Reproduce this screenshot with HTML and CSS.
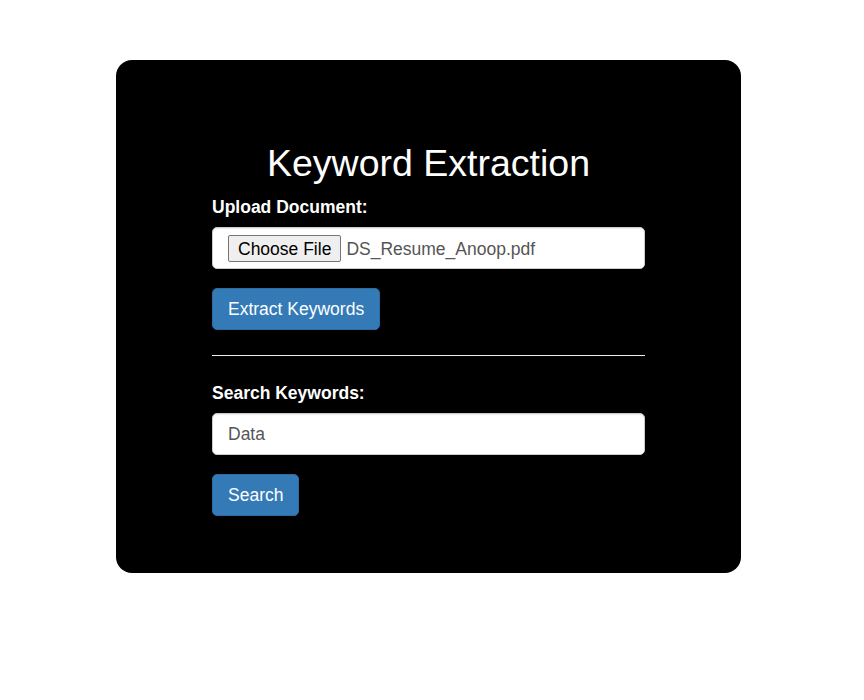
FILE: index.html
```html
<!DOCTYPE html>
<html lang="en">
<head>
<meta charset="utf-8">
<title>Keyword Extraction</title>
<link rel="stylesheet" href="styles.css">
</head>
<body>
<div class="card">
  <h1 class="title">Keyword Extraction</h1>
  <form class="section">
    <label class="label">Upload Document:</label>
    <div class="control file-control">
      <span class="file-btn">Choose File</span>
      <span class="file-name">DS_Resume_Anoop.pdf</span>
    </div>
    <button type="button" class="btn">Extract Keywords</button>
  </form>
  <hr class="divider">
  <form class="section">
    <label class="label">Search Keywords:</label>
    <input class="control text-input" type="text" value="Data">
    <button type="button" class="btn">Search</button>
  </form>
</div>
</body>
</html>
```
FILE: styles.css
```css
html, body {
  margin: 0;
  padding: 0;
  background: #ffffff;
}
body {
  font-family: "Liberation Sans", Arial, Helvetica, sans-serif;
  font-size: 17.5px;
  color: #333;
}
.card {
  box-sizing: border-box;
  width: 625px;
  margin: 60px 0 0 116px;
  padding: 81px 96px 57px 96px;
  background: #000;
  border-radius: 16px;
  display: flex;
  flex-direction: column;
}
.title {
  margin: 0 0 9.5px 0;
  font-size: 37.5px;
  line-height: 44px;
  font-weight: 400;
  color: #fff;
  text-align: center;
}
.section {
  display: flex;
  flex-direction: column;
  align-items: flex-start;
  margin: 0;
}
.label {
  font-weight: 700;
  font-size: 17.5px;
  line-height: 25px;
  color: #fff;
  margin-bottom: 7px;
}
.control {
  box-sizing: border-box;
  width: 100%;
  height: 42px;
  background: #fff;
  border: 1px solid #ccc;
  border-radius: 5px;
  box-shadow: inset 0 1px 1px rgba(0,0,0,0.075);
  font-family: "Liberation Sans", Arial, Helvetica, sans-serif;
  font-size: 17.5px;
  color: #555;
}
.file-control {
  display: flex;
  align-items: center;
  padding: 2px 15px 0 15px;
}
.file-btn {
  box-sizing: border-box;
  height: 27px;
  display: inline-flex;
  align-items: center;
  padding: 1px 9px 0 9px;
  background: #efefef;
  border: 1px solid #767676;
  border-radius: 2px;
  color: #000;
  font-size: 17.5px;
  margin-right: 5px;
}
.file-name {
  color: #555;
  padding-top: 1px;
}
.text-input {
  padding: 0 15px;
  outline: none;
}
.btn {
  box-sizing: border-box;
  height: 42px;
  margin-top: 19px;
  padding: 1px 15px 0 15px;
  background: #337ab7;
  border: 1px solid #2e6da4;
  border-radius: 5px;
  color: #fff;
  font-family: "Liberation Sans", Arial, Helvetica, sans-serif;
  font-size: 17.5px;
  line-height: 1.42857;
  cursor: pointer;
}
.divider {
  margin: 25px 0 25.5px 0;
  border: 0;
  border-top: 1px solid #eee;
  height: 0;
  width: 100%;
}
```
